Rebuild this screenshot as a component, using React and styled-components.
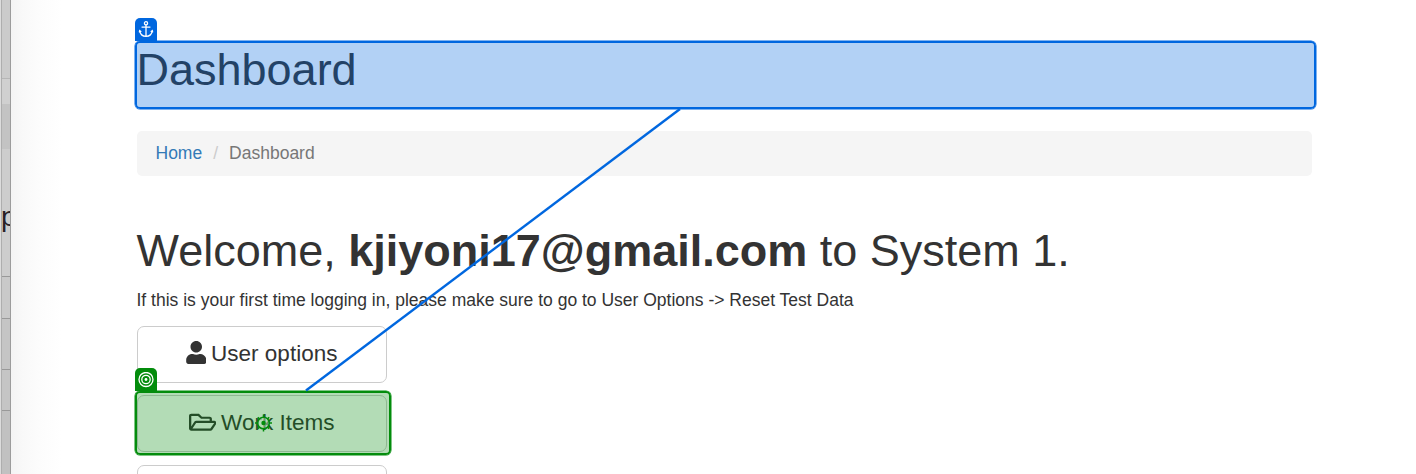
import React from 'react';
import styled, { createGlobalStyle } from 'styled-components';
import { FaUser, FaRegFolderOpen } from 'react-icons/fa';

const GlobalStyle = createGlobalStyle`
  * { box-sizing: border-box; }
  body {
    margin: 0;
    overflow: hidden;
    background: #fff;
    color: #333;
    font: 17.5px/25px "Liberation Sans", Arial, sans-serif;
  }
`;

const Screen = styled.div`
  position: relative;
  display: flex;
  width: 1416px;
  height: 474px;
  overflow: hidden;
`;

const Strip = styled.aside`
  flex: none;
  display: flex;
  flex-direction: column;
  width: 11px;
  height: 474px;
  overflow: hidden;
  border-left: 1px solid #dcdcdc;
  border-right: 1px solid #9c9c9c;
  background: #c8c8c8;
  box-shadow: inset 1px 0 #aeaeae;
`;

const StripCell = styled.div`
  flex: none;
  height: ${(p) => p.$height}px;
  margin-left: 1px;
  background: ${(p) => p.$tone};
  border-bottom: ${(p) => (p.$line ? `1px solid ${p.$line}` : 'none')};
`;

const StripText = styled.span`
  display: block;
  padding-top: 52px;
  margin-left: -1px;
  color: #292126;
  font-size: 28px;
  line-height: 32px;
`;

const Main = styled.main`
  flex: 1;
  padding: 45px 104px 0 126px;
  background: linear-gradient(90deg, #f4f4f4 0, #f9f9f9 12px, #fcfcfc 28px, #fff 50px);
`;

const Title = styled.h1`
  margin: 0;
  font-size: 45px;
  font-weight: 400;
  line-height: 50px;
  text-indent: -0.5px;
`;

const Breadcrumb = styled.nav`
  display: flex;
  align-items: center;
  height: 45px;
  margin: 36px 0 50px;
  padding: 0 18.5px;
  border-radius: 5px;
  background: #f5f5f5;
`;

const HomeLink = styled.a`
  color: #337ab7;
`;

const Slash = styled.span`
  padding: 0 11px;
  color: #ccc;
`;

const Current = styled.span`
  color: #777;
`;

const Intro = styled.p`
  margin: 12px 0 13px;
  text-indent: -0.5px;
`;

const Buttons = styled.div`
  display: flex;
  flex-direction: column;
  gap: 12.4px;
`;

const MenuButton = styled.button`
  display: flex;
  align-items: center;
  justify-content: center;
  gap: 5px;
  width: 250px;
  height: 57px;
  padding: 0 1px 2px 0;
  border: 1px solid #ccc;
  border-radius: 7px;
  background: #fff;
  color: #333;
  font: 22.5px/30px "Liberation Sans", Arial, sans-serif;
`;

const UserIcon = styled(FaUser)`
  flex: none;
  width: 20.5px;
  height: 23px;
  margin-top: -2px;
`;

const FolderIcon = styled(FaRegFolderOpen).attrs({ preserveAspectRatio: 'none' })`
  flex: none;
  width: 27.5px;
  height: 22.5px;
  margin-top: -1px;
`;

const Highlight = styled.div`
  position: absolute;
  left: 135px;
  top: ${(p) => p.$top}px;
  width: ${(p) => p.$width}px;
  height: ${(p) => p.$height}px;
  border: 2px solid ${(p) => p.$color};
  border-radius: 5px;
  background: ${(p) => p.$fill};
  background-clip: padding-box;
  box-shadow: 0 0 0 0.5px ${(p) => p.$color};
`;

const Badge = styled.div`
  position: absolute;
  left: 134.5px;
  top: ${(p) => p.$top}px;
  display: flex;
  align-items: center;
  justify-content: center;
  width: 22.5px;
  height: 23px;
  border-radius: 5px 5px 0 0;
  background: ${(p) => p.$color};
`;

const Overlay = styled.svg`
  position: absolute;
  left: 0;
  top: 0;
  pointer-events: none;
`;

const BLUE = '#0067df';
const GREEN = '#038c0c';

const AnchorIcon = () => (
  <svg width="16" height="18" viewBox="0 1.2 16 18" fill="none" stroke="#fff" strokeWidth="1.3" strokeLinecap="round">
    <circle cx="8" cy="3.5" r="1.6" />
    <path d="M8 5.2V16.4M4 7.3H12M1.7 10.8C2.1 14 4.5 16.5 8 16.5S13.9 14 14.3 10.8M1.4 12L1.7 10.7L2.9 11.6M14.6 12L14.3 10.7L13.1 11.6" />
  </svg>
);

const TargetIcon = () => (
  <svg width="16" height="16" viewBox="0 0.5 16 16" fill="none" stroke="#fff" strokeWidth="1.3">
    <circle cx="8" cy="8" r="7" />
    <circle cx="8" cy="8" r="4.2" />
    <circle cx="8" cy="8" r="1.4" fill="#fff" stroke="none" />
  </svg>
);

export default function App() {
  return (
    <Screen>
      <GlobalStyle />
      <Strip>
        <StripCell $height={79} $tone="#cbcbcb" $line="#b6b6b6" />
        <StripCell $height={25} $tone="#d0d0d0" />
        <StripCell $height={45} $tone="#c3c3c3" />
        <StripCell $height={128} $tone="#cdcdcd" $line="#999">
          <StripText>p</StripText>
        </StripCell>
        <StripCell $height={42} $tone="#c9c9c9" $line="#999" />
        <StripCell $height={51} $tone="#c5c5c5" $line="#999" />
        <StripCell $height={41} $tone="#c5c5c5" $line="#999" />
        <StripCell $height={63} $tone="#c1c1c1" />
      </Strip>
      <Main>
        <Title>Dashboard</Title>
        <Breadcrumb>
          <HomeLink>Home</HomeLink>
          <Slash>/</Slash>
          <Current>Dashboard</Current>
        </Breadcrumb>
        <Title>
          Welcome, <strong>kjiyoni17@gmail.com</strong> to System 1.
        </Title>
        <Intro>If this is your first time logging in, please make sure to go to User Options -&gt; Reset Test Data</Intro>
        <Buttons>
          <MenuButton><UserIcon />User options</MenuButton>
          <MenuButton><FolderIcon />Work Items</MenuButton>
          <MenuButton />
        </Buttons>
      </Main>
      <Highlight $top={41} $width={1181} $height={68} $color={BLUE} $fill="rgba(0,103,223,0.3)" />
      <Badge $top={18} $color={BLUE}><AnchorIcon /></Badge>
      <Highlight $top={391} $width={256} $height={64} $color={GREEN} $fill="rgba(3,140,12,0.3)" />
      <Badge $top={368} $color={GREEN}><TargetIcon /></Badge>
      <Overlay width="1416" height="474" viewBox="0 0 1416 474" fill="none">
        <path d="M680 109L306 390.5" stroke={BLUE} strokeWidth="2.4" />
        <g stroke={GREEN} strokeWidth="1.5">
          <circle cx="263.5" cy="423" r="5.8" fill="rgba(179,221,182,0.5)" />
          <path d="M263.5 414.5V417.5M263.5 428.5V431.5M255 423H258M269 423H272M257.8 417.3L259.4 418.9M269.2 417.3L267.6 418.9M257.8 428.7L259.4 427.1M269.2 428.7L267.6 427.1" />
          <circle cx="263.5" cy="423" r="2.2" fill={GREEN} stroke="none" />
        </g>
      </Overlay>
    </Screen>
  );
}
